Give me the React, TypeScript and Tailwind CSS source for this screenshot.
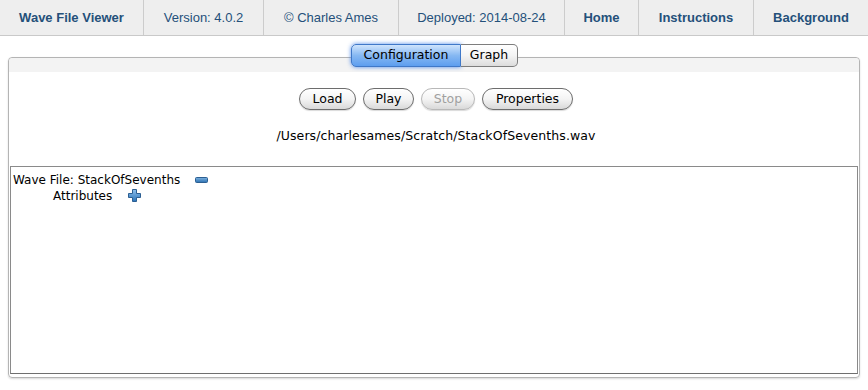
const navItems = [
  { label: 'Wave File Viewer', w: 'w-[144px]', bold: true },
  { label: 'Version: 4.0.2', w: 'w-[120px]', bold: false },
  { label: '© Charles Ames', w: 'w-[135px]', bold: false },
  { label: 'Deployed: 2014-08-24', w: 'w-[166px]', bold: false },
  { label: 'Home', w: 'w-[74px]', bold: true },
  { label: 'Instructions', w: 'w-[115px]', bold: true },
  { label: 'Background', w: 'w-[114px]', bold: true },
];

function PillButton({ label, w, disabled }: { label: string; w: string; disabled?: boolean }) {
  return (
    <button
      className={`${w} h-[22px] rounded-full border text-[12.5px] leading-none bg-gradient-to-b from-white via-[#f4f4f4] to-[#d9d9d9] shadow-[0_1px_1px_rgba(0,0,0,0.15)] ${
        disabled ? 'border-[#b8b8b8] text-[#a0a0a0]' : 'border-[#6d6d6d] text-black'
      }`}
    >
      {label}
    </button>
  );
}

function MinusIcon() {
  return (
    <svg width="13" height="6" viewBox="0 0 13 6">
      <defs>
        <linearGradient id="mg" x1="0" y1="0" x2="0" y2="1">
          <stop offset="0" stopColor="#7fb3e0" />
          <stop offset="1" stopColor="#2a6fb0" />
        </linearGradient>
      </defs>
      <rect x="0.5" y="0.5" width="12" height="5" rx="1" fill="url(#mg)" stroke="#2c5f92" />
    </svg>
  );
}

function PlusIcon() {
  return (
    <svg width="13" height="13" viewBox="0 0 13 13">
      <defs>
        <linearGradient id="pg" x1="0" y1="0" x2="0" y2="1">
          <stop offset="0" stopColor="#8ec0ec" />
          <stop offset="1" stopColor="#2a73b8" />
        </linearGradient>
      </defs>
      <path
        d="M4.5 0.5h4v4h4v4h-4v4h-4v-4h-4v-4h4z"
        fill="url(#pg)"
        stroke="#2c5f92"
        strokeLinejoin="round"
      />
    </svg>
  );
}

export default function App() {
  return (
    <div className="w-[868px] h-[390px] bg-white overflow-hidden" style={{ fontFamily: "'Liberation Sans', Arial, sans-serif" }}>
      <nav className="flex h-[36px] bg-[#eeeeee] border-b border-[#c9c9c9]">
        {navItems.map((item, i) => (
          <div
            key={i}
            className={`${item.w} flex items-center justify-center text-[13px] text-[#24507a] ${
              item.bold ? 'font-bold' : ''
            } ${i < navItems.length - 1 ? 'border-r border-[#cccccc]' : ''}`}
          >
            {item.label}
          </div>
        ))}
      </nav>

      <div className="pl-[8px] pr-[8px] pt-[21px]" style={{ fontFamily: "'DejaVu Sans', 'Open Sans', sans-serif" }}>
        <div className="relative h-[321px] flex flex-col rounded-[4px] border border-[#b4b4b4] shadow-[0_1px_2px_rgba(0,0,0,0.15)]">
          <div className="absolute left-0 right-0 -top-[14px] flex justify-center">
            <div className="flex ml-[1px]">
              <button className="w-[110px] h-[23px] rounded-l-[5px] border border-[#3f78c8] text-[12.5px] text-black bg-gradient-to-b from-[#cfe4fc] via-[#86b8f2] to-[#5d9eef] shadow-[0_0_4px_rgba(50,120,230,0.85)]">
                Configuration
              </button>
              <button className="w-[57px] h-[23px] rounded-r-[5px] border border-l-0 border-[#7d7d7d] text-[12.5px] text-black bg-gradient-to-b from-white via-[#f4f4f4] to-[#dcdcdc]">
                Graph
              </button>
            </div>
          </div>
          <div className="h-[14px] bg-[#f3f3f3] rounded-t-[4px]" />

          <div className="flex justify-center gap-[7px] mt-[16px] ml-[4px]">
            <PillButton label="Load" w="w-[57px]" />
            <PillButton label="Play" w="w-[51px]" />
            <PillButton label="Stop" w="w-[54px]" disabled />
            <PillButton label="Properties" w="w-[91px]" />
          </div>

          <div className="mt-[17px] text-center text-[12.5px] tracking-[0.1px] text-black ml-[4px]">
            /Users/charlesames/Scratch/StackOfSevenths.wav
          </div>

          <div className="flex-1 mt-[20px] mb-[3px] ml-[1px] mr-[1px] border border-[#8a8a8a] border-b-[#6f6f6f] pt-[5px] pl-[2px] text-[12px] text-black">
            <div className="flex items-center h-[16px]">
              <span>Wave File: StackOfSevenths</span>
              <span className="ml-[15px] flex items-center">
                <MinusIcon />
              </span>
            </div>
            <div className="flex items-center h-[16px] pl-[40px]">
              <span>Attributes</span>
              <span className="ml-[16px] flex items-center">
                <PlusIcon />
              </span>
            </div>
          </div>
        </div>
      </div>
    </div>
  );
}
